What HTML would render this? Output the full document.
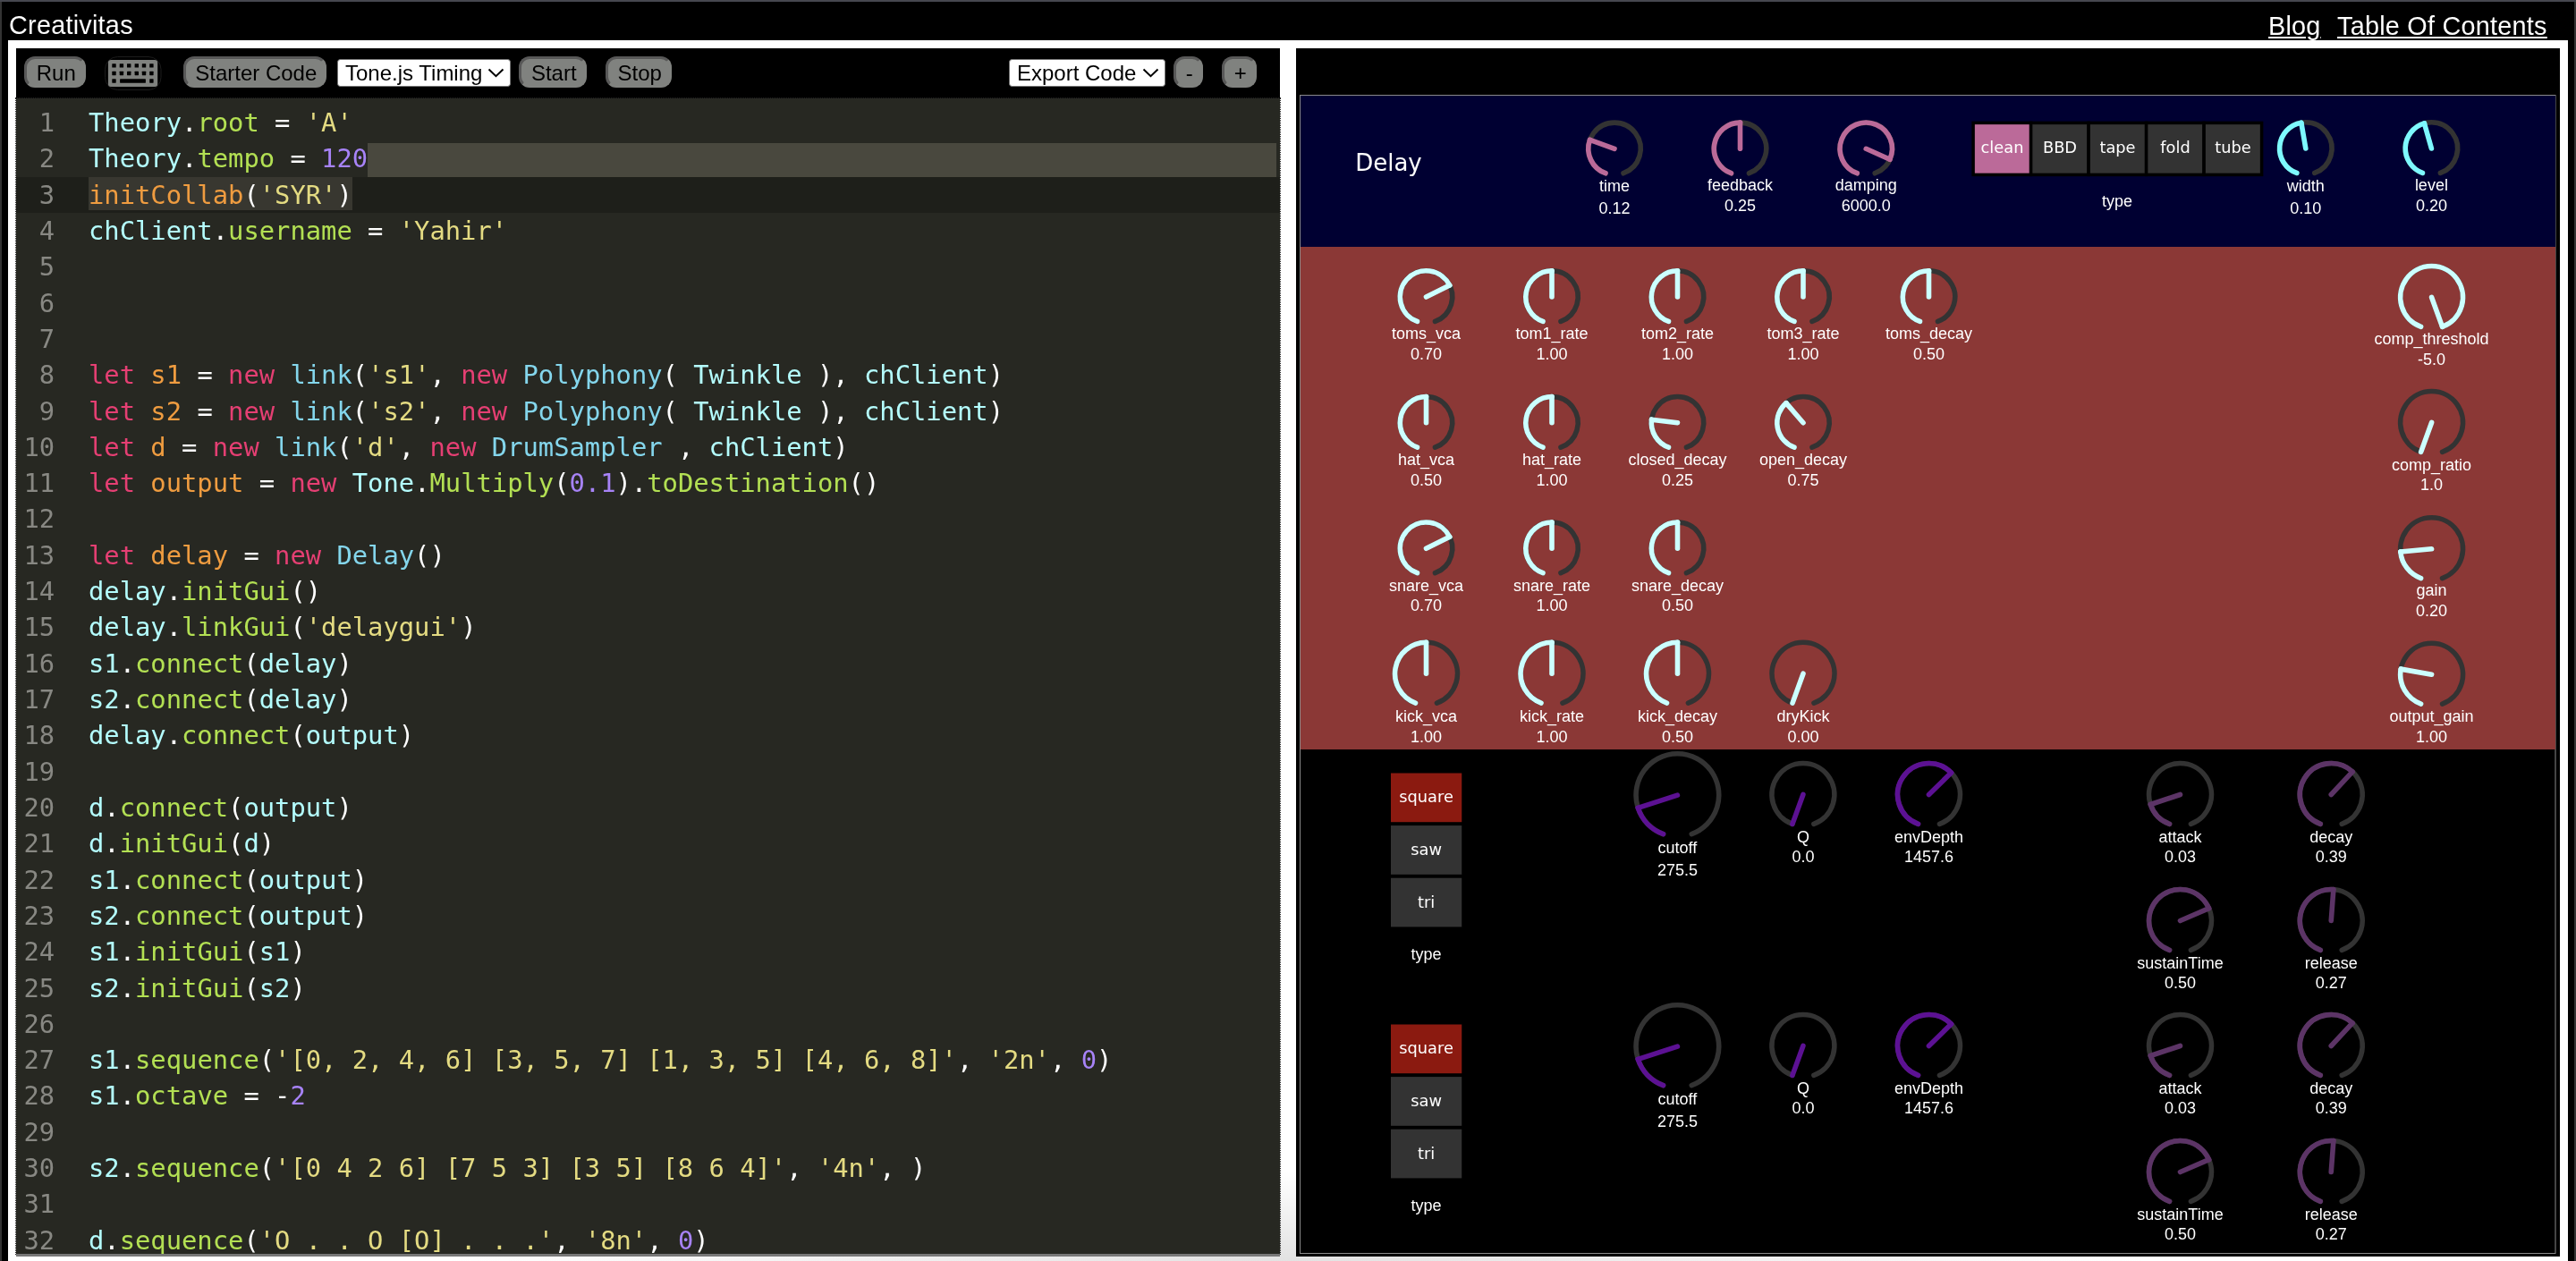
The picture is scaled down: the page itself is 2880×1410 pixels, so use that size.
<!DOCTYPE html>
<html lang="en"><head><meta charset="utf-8"><title>Creativitas</title>
<style>
html,body{margin:0;padding:0}
body{width:2880px;height:1410px;overflow:hidden;background:#000;position:relative;font-family:"Liberation Sans",sans-serif}
.abs{position:absolute}
.code,.btn,.sel,.title,.nav,.cv{will-change:transform}
.frame-t{left:0;top:0;width:2880px;height:2px;background:#46474f}
.frame-l{left:0;top:2px;width:2px;height:1408px;background:#343434}
.frame-r{left:2878px;top:2px;width:2px;height:1408px;background:#343434}
.title{left:9.5px;top:11px;font-size:28.8px;line-height:34px;color:#fff;white-space:nowrap;letter-spacing:0.25px}
.nav{top:11.8px;font-size:28.8px;line-height:34px;color:#fff;white-space:nowrap;letter-spacing:0.25px;text-decoration:underline;text-decoration-thickness:2px;text-underline-offset:1.5px}
.white{left:9px;top:45px;width:2862px;height:1365px;background:#fff radial-gradient(ellipse 950px 100px at 1440px 100%,#e2e2e2 0%,#fff 100%)}
.foot{left:9px;top:1405px;width:2862px;height:5px;background:#e9e9e9}
.lp{left:18px;top:54px;width:1413px;height:1351px;background:#000}
.rp{left:1449px;top:54px;width:1413px;height:1351px;background:#000}
.btn{position:absolute;box-sizing:border-box;top:63px;height:35px;background:#80827f;border:3px solid;border-color:#585858 #80827f #80827f #585858;border-radius:12px;font-size:24px;line-height:27px;color:#000;text-align:center;white-space:nowrap;padding:1.8px 0 0 2.5px;margin:0;font-family:inherit;display:block;-webkit-appearance:none;appearance:none;outline:none;cursor:pointer;letter-spacing:normal;vertical-align:top}
.sel{position:absolute;box-sizing:border-box;top:66px;height:31px;background:#fff;border:1px solid #767676;border-radius:3.5px;font-size:24px;line-height:28px;color:#000;white-space:nowrap;padding:1px 0 0 8px;margin:0;font-family:inherit;-webkit-appearance:none;appearance:none;outline:none;display:block}
.chw{position:absolute;top:66px;height:31px;pointer-events:none}
.chev{position:absolute;right:7px;top:10px}
.kbd{position:absolute;left:117px;top:63px}
.ed{left:18px;top:110px;width:1413px;height:1291.5px;background:#272822;overflow:hidden;outline:1px dotted #212121}
.edbar{left:18px;top:1401.5px;width:1413px;height:3.5px;background:#787878}
.code{position:absolute;left:0;top:7.3px;width:1413px;font-family:"DejaVu Sans Mono","Liberation Mono",monospace;font-size:28.8px;line-height:40.32px;color:#fff}
.ln{position:relative;height:40.32px}
.actbg{left:0;top:87.94px;width:1413px;height:40.32px;background:#1e1f1a}
.no{position:absolute;left:0;width:43.2px;text-align:right;color:#888883}
.tx{position:absolute;left:81px;white-space:pre}
.v{color:#b4fdfe}.c{color:#84d6ec}.p{color:#b3e053}.s{color:#e4db82}.n{color:#a783f7}.k{color:#e53f73}.d{color:#ef9c40}
.sel1{left:392.75px;top:49.7px;width:1016.25px;height:38.3px;background:#49483e}
.sel2{left:81px;top:88px;width:295.25px;height:36.75px;background:#383730}
.cv{position:absolute;left:0;top:0}
.kl text{font-family:"Liberation Sans",sans-serif;font-size:18px}
.dj text{font-family:"DejaVu Sans","Liberation Sans",sans-serif;font-size:17.8px}
.dt{font-family:"DejaVu Sans","Liberation Sans",sans-serif;font-size:26px}
</style></head><body>
<div class="abs title">Creativitas</div>
<a class="abs nav" style="left:2536px">Blog</a>
<a class="abs nav" style="left:2612.6px">Table Of Contents</a>
<div class="abs white"></div>
<div class="abs lp"></div>
<div class="abs rp"></div>
<button type="button" class="btn" style="left:27px;width:69px">Run</button>
<svg class="kbd" width="64" height="38" viewBox="117 63 64 38"><rect x="117.5" y="63.5" width="62.5" height="37" rx="14" fill="none" stroke="#1c1c1c"/><rect x="120.9" y="66.9" width="55.3" height="30.1" rx="3.2" fill="#80827f"/><g fill="#000"><rect x="125.3" y="71.2" width="4.4" height="4.4" rx="0.4"/><rect x="133.7" y="71.2" width="4.4" height="4.4" rx="0.4"/><rect x="142.0" y="71.2" width="4.4" height="4.4" rx="0.4"/><rect x="150.6" y="71.2" width="4.4" height="4.4" rx="0.4"/><rect x="158.8" y="71.2" width="4.4" height="4.4" rx="0.4"/><rect x="167.2" y="71.2" width="4.4" height="4.4" rx="0.4"/><rect x="125.3" y="79.8" width="4.4" height="4.4" rx="0.4"/><rect x="133.7" y="79.8" width="4.4" height="4.4" rx="0.4"/><rect x="142.0" y="79.8" width="4.4" height="4.4" rx="0.4"/><rect x="150.6" y="79.8" width="4.4" height="4.4" rx="0.4"/><rect x="158.8" y="79.8" width="4.4" height="4.4" rx="0.4"/><rect x="167.2" y="79.8" width="4.4" height="4.4" rx="0.4"/><rect x="125.3" y="88.3" width="4.4" height="4.4" rx="0.4"/><rect x="167.2" y="88.3" width="4.4" height="4.4" rx="0.4"/><rect x="134.1" y="88.3" width="28.8" height="4.4" rx="0.4"/></g></svg>
<button type="button" class="btn" style="left:205px;width:160px">Starter Code</button>
<select class="sel" style="left:377px;width:194px"><option selected>Tone.js Timing</option></select><span class="chw" style="left:377px;width:194px"><svg class="chev" width="19" height="11" viewBox="0 0 19 11"><path d="M1.5 1.5L9.5 9.2L17.5 1.5" fill="none" stroke="#000" stroke-width="2"/></svg></span>
<button type="button" class="btn" style="left:580px;width:76px">Start</button>
<button type="button" class="btn" style="left:677px;width:74px">Stop</button>
<select class="sel" style="left:1128px;width:175px"><option selected>Export Code</option></select><span class="chw" style="left:1128px;width:175px"><svg class="chev" width="19" height="11" viewBox="0 0 19 11"><path d="M1.5 1.5L9.5 9.2L17.5 1.5" fill="none" stroke="#000" stroke-width="2"/></svg></span>
<button type="button" class="btn" style="left:1312px;width:33px">-</button>
<button type="button" class="btn" style="left:1366px;width:39px">+</button>
<div class="abs ed">
<div class="abs actbg"></div>
<div class="abs sel1"></div>
<div class="abs sel2"></div>
<div class="code">
<div class="ln"><span class="no">1</span><span class="tx"><span class="v">Theory</span>.<span class="p">root</span> = <span class="s">'A'</span></span></div>
<div class="ln"><span class="no">2</span><span class="tx"><span class="v">Theory</span>.<span class="p">tempo</span> = <span class="n">120</span></span></div>
<div class="ln act"><span class="no">3</span><span class="tx"><span class="d">initCollab</span>(<span class="s">'SYR'</span>)</span></div>
<div class="ln"><span class="no">4</span><span class="tx"><span class="v">chClient</span>.<span class="p">username</span> = <span class="s">'Yahir'</span></span></div>
<div class="ln"><span class="no">5</span><span class="tx"></span></div>
<div class="ln"><span class="no">6</span><span class="tx"></span></div>
<div class="ln"><span class="no">7</span><span class="tx"></span></div>
<div class="ln"><span class="no">8</span><span class="tx"><span class="k">let</span> <span class="d">s1</span> = <span class="k">new</span> <span class="c">link</span>(<span class="s">'s1'</span>, <span class="k">new</span> <span class="c">Polyphony</span>( <span class="v">Twinkle</span> ), <span class="v">chClient</span>)</span></div>
<div class="ln"><span class="no">9</span><span class="tx"><span class="k">let</span> <span class="d">s2</span> = <span class="k">new</span> <span class="c">link</span>(<span class="s">'s2'</span>, <span class="k">new</span> <span class="c">Polyphony</span>( <span class="v">Twinkle</span> ), <span class="v">chClient</span>)</span></div>
<div class="ln"><span class="no">10</span><span class="tx"><span class="k">let</span> <span class="d">d</span> = <span class="k">new</span> <span class="c">link</span>(<span class="s">'d'</span>, <span class="k">new</span> <span class="c">DrumSampler</span> , <span class="v">chClient</span>)</span></div>
<div class="ln"><span class="no">11</span><span class="tx"><span class="k">let</span> <span class="d">output</span> = <span class="k">new</span> <span class="v">Tone</span>.<span class="p">Multiply</span>(<span class="n">0.1</span>).<span class="p">toDestination</span>()</span></div>
<div class="ln"><span class="no">12</span><span class="tx"></span></div>
<div class="ln"><span class="no">13</span><span class="tx"><span class="k">let</span> <span class="d">delay</span> = <span class="k">new</span> <span class="c">Delay</span>()</span></div>
<div class="ln"><span class="no">14</span><span class="tx"><span class="v">delay</span>.<span class="p">initGui</span>()</span></div>
<div class="ln"><span class="no">15</span><span class="tx"><span class="v">delay</span>.<span class="p">linkGui</span>(<span class="s">'delaygui'</span>)</span></div>
<div class="ln"><span class="no">16</span><span class="tx"><span class="v">s1</span>.<span class="p">connect</span>(<span class="v">delay</span>)</span></div>
<div class="ln"><span class="no">17</span><span class="tx"><span class="v">s2</span>.<span class="p">connect</span>(<span class="v">delay</span>)</span></div>
<div class="ln"><span class="no">18</span><span class="tx"><span class="v">delay</span>.<span class="p">connect</span>(<span class="v">output</span>)</span></div>
<div class="ln"><span class="no">19</span><span class="tx"></span></div>
<div class="ln"><span class="no">20</span><span class="tx"><span class="v">d</span>.<span class="p">connect</span>(<span class="v">output</span>)</span></div>
<div class="ln"><span class="no">21</span><span class="tx"><span class="v">d</span>.<span class="p">initGui</span>(<span class="v">d</span>)</span></div>
<div class="ln"><span class="no">22</span><span class="tx"><span class="v">s1</span>.<span class="p">connect</span>(<span class="v">output</span>)</span></div>
<div class="ln"><span class="no">23</span><span class="tx"><span class="v">s2</span>.<span class="p">connect</span>(<span class="v">output</span>)</span></div>
<div class="ln"><span class="no">24</span><span class="tx"><span class="v">s1</span>.<span class="p">initGui</span>(<span class="v">s1</span>)</span></div>
<div class="ln"><span class="no">25</span><span class="tx"><span class="v">s2</span>.<span class="p">initGui</span>(<span class="v">s2</span>)</span></div>
<div class="ln"><span class="no">26</span><span class="tx"></span></div>
<div class="ln"><span class="no">27</span><span class="tx"><span class="v">s1</span>.<span class="p">sequence</span>(<span class="s">'[0, 2, 4, 6] [3, 5, 7] [1, 3, 5] [4, 6, 8]'</span>, <span class="s">'2n'</span>, <span class="n">0</span>)</span></div>
<div class="ln"><span class="no">28</span><span class="tx"><span class="v">s1</span>.<span class="p">octave</span> = -<span class="n">2</span></span></div>
<div class="ln"><span class="no">29</span><span class="tx"></span></div>
<div class="ln"><span class="no">30</span><span class="tx"><span class="v">s2</span>.<span class="p">sequence</span>(<span class="s">'[0 4 2 6] [7 5 3] [3 5] [8 6 4]'</span>, <span class="s">'4n'</span>, )</span></div>
<div class="ln"><span class="no">31</span><span class="tx"></span></div>
<div class="ln"><span class="no">32</span><span class="tx"><span class="v">d</span>.<span class="p">sequence</span>(<span class="s">'O . . O [O] . . .'</span>, <span class="s">'8n'</span>, <span class="n">0</span>)</span></div>
</div>
</div>
<div class="abs edbar"></div>
<svg class="cv" width="2880" height="1410" viewBox="0 0 2880 1410">
<rect x="1453.5" y="106.5" width="1403.5" height="1295" fill="#000" stroke="#8a8a8a" stroke-width="1"/>
<rect x="1454" y="107" width="1403" height="169" fill="#000032"/>
<rect x="1454" y="276" width="1403" height="562" fill="#8b3836"/>
<g stroke="#000" stroke-width="3.5">
<rect x="2206.10" y="137.4" width="64.5" height="58" fill="#bb6a99"/>
<rect x="2270.60" y="137.4" width="64.5" height="58" fill="#333333"/>
<rect x="2335.10" y="137.4" width="64.5" height="58" fill="#333333"/>
<rect x="2399.60" y="137.4" width="64.5" height="58" fill="#333333"/>
<rect x="2464.10" y="137.4" width="64.5" height="58" fill="#333333"/>
</g>
<rect x="1555" y="864.50" width="79.25" height="54.7" fill="#8b1a10"/>
<rect x="1555" y="923.10" width="79.25" height="54.7" fill="#333333"/>
<rect x="1555" y="981.70" width="79.25" height="54.7" fill="#333333"/>
<rect x="1555" y="1145.50" width="79.25" height="54.7" fill="#8b1a10"/>
<rect x="1555" y="1204.10" width="79.25" height="54.7" fill="#333333"/>
<rect x="1555" y="1262.70" width="79.25" height="54.7" fill="#333333"/>
<g fill="none" stroke-width="5.6" stroke-linecap="round">
<path d="M1795.01 193.74A29.20 29.20 0 1 1 1814.99 193.74" stroke="#333333"/><path d="M1795.01 193.74A29.20 29.20 0 0 1 1777.51 156.46" stroke="#bb6a99"/><path d="M1805.00 166.30L1777.51 156.46" stroke="#bb6a99"/>
<path d="M1935.51 193.74A29.20 29.20 0 1 1 1955.49 193.74" stroke="#333333"/><path d="M1935.51 193.74A29.20 29.20 0 0 1 1945.50 137.10" stroke="#bb6a99"/><path d="M1945.50 166.30L1945.50 137.10" stroke="#bb6a99"/>
<path d="M2076.26 193.74A29.20 29.20 0 1 1 2096.24 193.74" stroke="#333333"/><path d="M2076.26 193.74A29.20 29.20 0 1 1 2112.88 178.27" stroke="#bb6a99"/><path d="M2086.25 166.30L2112.88 178.27" stroke="#bb6a99"/>
<path d="M2567.81 193.44A29.20 29.20 0 1 1 2587.79 193.44" stroke="#333333"/><path d="M2567.81 193.44A29.20 29.20 0 0 1 2572.85 137.22" stroke="#7df9ff"/><path d="M2577.80 166.00L2572.85 137.22" stroke="#7df9ff"/>
<path d="M2708.41 193.44A29.20 29.20 0 1 1 2728.39 193.44" stroke="#333333"/><path d="M2708.41 193.44A29.20 29.20 0 0 1 2710.45 137.90" stroke="#7df9ff"/><path d="M2718.40 166.00L2710.45 137.90" stroke="#7df9ff"/>
<path d="M1584.51 359.44A29.20 29.20 0 1 1 1604.49 359.44" stroke="#333333"/><path d="M1584.51 359.44A29.20 29.20 0 1 1 1620.70 319.11" stroke="#ccffff"/><path d="M1594.50 332.00L1620.70 319.11" stroke="#ccffff"/>
<path d="M1725.01 359.44A29.20 29.20 0 1 1 1744.99 359.44" stroke="#333333"/><path d="M1725.01 359.44A29.20 29.20 0 0 1 1735.00 302.80" stroke="#ccffff"/><path d="M1735.00 332.00L1735.00 302.80" stroke="#ccffff"/>
<path d="M1865.51 359.44A29.20 29.20 0 1 1 1885.49 359.44" stroke="#333333"/><path d="M1865.51 359.44A29.20 29.20 0 0 1 1875.50 302.80" stroke="#ccffff"/><path d="M1875.50 332.00L1875.50 302.80" stroke="#ccffff"/>
<path d="M2006.01 359.44A29.20 29.20 0 1 1 2025.99 359.44" stroke="#333333"/><path d="M2006.01 359.44A29.20 29.20 0 0 1 2016.00 302.80" stroke="#ccffff"/><path d="M2016.00 332.00L2016.00 302.80" stroke="#ccffff"/>
<path d="M2146.51 359.44A29.20 29.20 0 1 1 2166.49 359.44" stroke="#333333"/><path d="M2146.51 359.44A29.20 29.20 0 0 1 2156.50 302.80" stroke="#ccffff"/><path d="M2156.50 332.00L2156.50 302.80" stroke="#ccffff"/>
<path d="M1584.51 500.19A29.20 29.20 0 1 1 1604.49 500.19" stroke="#333333"/><path d="M1584.51 500.19A29.20 29.20 0 0 1 1594.50 443.55" stroke="#ccffff"/><path d="M1594.50 472.75L1594.50 443.55" stroke="#ccffff"/>
<path d="M1725.01 500.19A29.20 29.20 0 1 1 1744.99 500.19" stroke="#333333"/><path d="M1725.01 500.19A29.20 29.20 0 0 1 1735.00 443.55" stroke="#ccffff"/><path d="M1735.00 472.75L1735.00 443.55" stroke="#ccffff"/>
<path d="M1865.51 500.19A29.20 29.20 0 1 1 1885.49 500.19" stroke="#333333"/><path d="M1865.51 500.19A29.20 29.20 0 0 1 1846.52 469.19" stroke="#ccffff"/><path d="M1875.50 472.75L1846.52 469.19" stroke="#ccffff"/>
<path d="M2006.01 500.19A29.20 29.20 0 1 1 2025.99 500.19" stroke="#333333"/><path d="M2006.01 500.19A29.20 29.20 0 0 1 1996.92 450.65" stroke="#ccffff"/><path d="M2016.00 472.75L1996.92 450.65" stroke="#ccffff"/>
<path d="M1584.51 640.69A29.20 29.20 0 1 1 1604.49 640.69" stroke="#333333"/><path d="M1584.51 640.69A29.20 29.20 0 1 1 1620.70 600.36" stroke="#ccffff"/><path d="M1594.50 613.25L1620.70 600.36" stroke="#ccffff"/>
<path d="M1725.01 640.69A29.20 29.20 0 1 1 1744.99 640.69" stroke="#333333"/><path d="M1725.01 640.69A29.20 29.20 0 0 1 1735.00 584.05" stroke="#ccffff"/><path d="M1735.00 613.25L1735.00 584.05" stroke="#ccffff"/>
<path d="M1865.51 640.69A29.20 29.20 0 1 1 1885.49 640.69" stroke="#333333"/><path d="M1865.51 640.69A29.20 29.20 0 0 1 1875.50 584.05" stroke="#ccffff"/><path d="M1875.50 613.25L1875.50 584.05" stroke="#ccffff"/>
<path d="M1582.55 786.09A34.95 34.95 0 1 1 1606.45 786.09" stroke="#333333"/><path d="M1582.55 786.09A34.95 34.95 0 0 1 1594.50 718.30" stroke="#ccffff"/><path d="M1594.50 753.25L1594.50 718.30" stroke="#ccffff"/>
<path d="M1723.05 786.09A34.95 34.95 0 1 1 1746.95 786.09" stroke="#333333"/><path d="M1723.05 786.09A34.95 34.95 0 0 1 1735.00 718.30" stroke="#ccffff"/><path d="M1735.00 753.25L1735.00 718.30" stroke="#ccffff"/>
<path d="M1863.55 786.09A34.95 34.95 0 1 1 1887.45 786.09" stroke="#333333"/><path d="M1863.55 786.09A34.95 34.95 0 0 1 1875.50 718.30" stroke="#ccffff"/><path d="M1875.50 753.25L1875.50 718.30" stroke="#ccffff"/>
<path d="M2004.05 786.09A34.95 34.95 0 1 1 2027.95 786.09" stroke="#333333"/><path d="M2016.00 753.25L2004.05 786.09" stroke="#ccffff"/>
<path d="M2706.65 365.34A34.95 34.95 0 1 1 2730.55 365.34" stroke="#333333"/><path d="M2706.65 365.34A34.95 34.95 0 1 1 2730.55 365.34" stroke="#ccffff"/><path d="M2718.60 332.50L2730.55 365.34" stroke="#ccffff"/>
<path d="M2706.65 505.34A34.95 34.95 0 1 1 2730.55 505.34" stroke="#333333"/><path d="M2718.60 472.50L2706.65 505.34" stroke="#ccffff"/>
<path d="M2706.65 646.54A34.95 34.95 0 1 1 2730.55 646.54" stroke="#333333"/><path d="M2706.65 646.54A34.95 34.95 0 0 1 2683.80 616.93" stroke="#ccffff"/><path d="M2718.60 613.70L2683.80 616.93" stroke="#ccffff"/>
<path d="M2706.65 787.04A34.95 34.95 0 1 1 2730.55 787.04" stroke="#333333"/><path d="M2706.65 787.04A34.95 34.95 0 0 1 2684.18 748.13" stroke="#ccffff"/><path d="M2718.60 754.20L2684.18 748.13" stroke="#ccffff"/>
<path d="M1859.56 932.63A46.33 46.33 0 1 1 1891.24 932.63" stroke="#333333"/><path d="M1859.56 932.63A46.33 46.33 0 0 1 1831.34 903.42" stroke="#5c1193"/><path d="M1875.40 889.10L1831.34 903.42" stroke="#5c1193"/>
<path d="M2003.95 921.34A34.95 34.95 0 1 1 2027.85 921.34" stroke="#333333"/><path d="M2015.90 888.50L2003.95 921.34" stroke="#5c1193"/>
<path d="M2144.55 921.34A34.95 34.95 0 1 1 2168.45 921.34" stroke="#333333"/><path d="M2144.55 921.34A34.95 34.95 0 1 1 2181.47 864.05" stroke="#5c1193"/><path d="M2156.50 888.50L2181.47 864.05" stroke="#5c1193"/>
<path d="M2425.55 921.34A34.95 34.95 0 1 1 2449.45 921.34" stroke="#333333"/><path d="M2425.55 921.34A34.95 34.95 0 0 1 2404.34 899.53" stroke="#5c3466"/><path d="M2437.50 888.50L2404.34 899.53" stroke="#5c3466"/>
<path d="M2594.30 921.34A34.95 34.95 0 1 1 2618.20 921.34" stroke="#333333"/><path d="M2594.30 921.34A34.95 34.95 0 1 1 2630.09 862.94" stroke="#5c3466"/><path d="M2606.25 888.50L2630.09 862.94" stroke="#5c3466"/>
<path d="M2425.55 1062.34A34.95 34.95 0 1 1 2449.45 1062.34" stroke="#333333"/><path d="M2425.55 1062.34A34.95 34.95 0 1 1 2469.60 1015.68" stroke="#5c3466"/><path d="M2437.50 1029.50L2469.60 1015.68" stroke="#5c3466"/>
<path d="M2594.30 1062.34A34.95 34.95 0 1 1 2618.20 1062.34" stroke="#333333"/><path d="M2594.30 1062.34A34.95 34.95 0 0 1 2608.87 994.65" stroke="#5c3466"/><path d="M2606.25 1029.50L2608.87 994.65" stroke="#5c3466"/>
<path d="M1859.56 1213.63A46.33 46.33 0 1 1 1891.24 1213.63" stroke="#333333"/><path d="M1859.56 1213.63A46.33 46.33 0 0 1 1831.34 1184.42" stroke="#5c1193"/><path d="M1875.40 1170.10L1831.34 1184.42" stroke="#5c1193"/>
<path d="M2003.95 1202.34A34.95 34.95 0 1 1 2027.85 1202.34" stroke="#333333"/><path d="M2015.90 1169.50L2003.95 1202.34" stroke="#5c1193"/>
<path d="M2144.55 1202.34A34.95 34.95 0 1 1 2168.45 1202.34" stroke="#333333"/><path d="M2144.55 1202.34A34.95 34.95 0 1 1 2181.47 1145.05" stroke="#5c1193"/><path d="M2156.50 1169.50L2181.47 1145.05" stroke="#5c1193"/>
<path d="M2425.55 1202.34A34.95 34.95 0 1 1 2449.45 1202.34" stroke="#333333"/><path d="M2425.55 1202.34A34.95 34.95 0 0 1 2404.34 1180.53" stroke="#5c3466"/><path d="M2437.50 1169.50L2404.34 1180.53" stroke="#5c3466"/>
<path d="M2594.30 1202.34A34.95 34.95 0 1 1 2618.20 1202.34" stroke="#333333"/><path d="M2594.30 1202.34A34.95 34.95 0 1 1 2630.09 1143.94" stroke="#5c3466"/><path d="M2606.25 1169.50L2630.09 1143.94" stroke="#5c3466"/>
<path d="M2425.55 1343.34A34.95 34.95 0 1 1 2449.45 1343.34" stroke="#333333"/><path d="M2425.55 1343.34A34.95 34.95 0 1 1 2469.60 1296.68" stroke="#5c3466"/><path d="M2437.50 1310.50L2469.60 1296.68" stroke="#5c3466"/>
<path d="M2594.30 1343.34A34.95 34.95 0 1 1 2618.20 1343.34" stroke="#333333"/><path d="M2594.30 1343.34A34.95 34.95 0 0 1 2608.87 1275.65" stroke="#5c3466"/><path d="M2606.25 1310.50L2608.87 1275.65" stroke="#5c3466"/>
</g>
<g class="kl" text-anchor="middle" fill="#fff">
<text x="1805.0" y="213.8">time</text><text x="1805.0" y="238.8">0.12</text>
<text x="1945.5" y="212.5">feedback</text><text x="1945.5" y="236.0">0.25</text>
<text x="2086.2" y="212.6">damping</text><text x="2086.2" y="235.9">6000.0</text>
<text x="2577.8" y="213.6">width</text><text x="2577.8" y="238.6">0.10</text>
<text x="2718.4" y="213.0">level</text><text x="2718.4" y="236.3">0.20</text>
<text x="1594.5" y="378.8">toms_vca</text><text x="1594.5" y="401.8">0.70</text>
<text x="1735.0" y="378.8">tom1_rate</text><text x="1735.0" y="401.8">1.00</text>
<text x="1875.5" y="378.8">tom2_rate</text><text x="1875.5" y="401.8">1.00</text>
<text x="2016.0" y="378.8">tom3_rate</text><text x="2016.0" y="401.8">1.00</text>
<text x="2156.5" y="378.8">toms_decay</text><text x="2156.5" y="401.8">0.50</text>
<text x="1594.5" y="520.0">hat_vca</text><text x="1594.5" y="542.5">0.50</text>
<text x="1735.0" y="520.0">hat_rate</text><text x="1735.0" y="542.5">1.00</text>
<text x="1875.5" y="520.0">closed_decay</text><text x="1875.5" y="542.5">0.25</text>
<text x="2016.0" y="520.0">open_decay</text><text x="2016.0" y="542.5">0.75</text>
<text x="1594.5" y="660.5">snare_vca</text><text x="1594.5" y="682.5">0.70</text>
<text x="1735.0" y="660.5">snare_rate</text><text x="1735.0" y="682.5">1.00</text>
<text x="1875.5" y="660.5">snare_decay</text><text x="1875.5" y="682.5">0.50</text>
<text x="1594.5" y="807.0">kick_vca</text><text x="1594.5" y="829.5">1.00</text>
<text x="1735.0" y="807.0">kick_rate</text><text x="1735.0" y="829.5">1.00</text>
<text x="1875.5" y="807.0">kick_decay</text><text x="1875.5" y="829.5">0.50</text>
<text x="2016.0" y="807.0">dryKick</text><text x="2016.0" y="829.5">0.00</text>
<text x="2718.6" y="385.0">comp_threshold</text><text x="2718.6" y="407.9">-5.0</text>
<text x="2718.6" y="526.2">comp_ratio</text><text x="2718.6" y="547.7">1.0</text>
<text x="2718.6" y="666.0">gain</text><text x="2718.6" y="688.6">0.20</text>
<text x="2718.6" y="806.6">output_gain</text><text x="2718.6" y="829.6">1.00</text>
<text x="1875.4" y="954.1">cutoff</text><text x="1875.4" y="978.8">275.5</text>
<text x="2015.9" y="941.7">Q</text><text x="2015.9" y="963.9">0.0</text>
<text x="2156.5" y="941.7">envDepth</text><text x="2156.5" y="963.9">1457.6</text>
<text x="2437.5" y="941.7">attack</text><text x="2437.5" y="963.9">0.03</text>
<text x="2606.2" y="941.7">decay</text><text x="2606.2" y="963.9">0.39</text>
<text x="2437.5" y="1083.0">sustainTime</text><text x="2437.5" y="1105.2">0.50</text>
<text x="2606.2" y="1083.0">release</text><text x="2606.2" y="1105.2">0.27</text>
<text x="1875.4" y="1235.1">cutoff</text><text x="1875.4" y="1259.8">275.5</text>
<text x="2015.9" y="1222.7">Q</text><text x="2015.9" y="1244.9">0.0</text>
<text x="2156.5" y="1222.7">envDepth</text><text x="2156.5" y="1244.9">1457.6</text>
<text x="2437.5" y="1222.7">attack</text><text x="2437.5" y="1244.9">0.03</text>
<text x="2606.2" y="1222.7">decay</text><text x="2606.2" y="1244.9">0.39</text>
<text x="2437.5" y="1364.0">sustainTime</text><text x="2437.5" y="1386.2">0.50</text>
<text x="2606.2" y="1364.0">release</text><text x="2606.2" y="1386.2">0.27</text>
<text x="2367" y="230.6">type</text>
<text x="1594.5" y="1073.3">type</text><text x="1594.5" y="1354.3">type</text>
</g>
<g class="dj" text-anchor="middle" fill="#fff">
<text x="2238.50" y="170.75">clean</text>
<text x="2303.00" y="170.75">BBD</text>
<text x="2367.50" y="170.75">tape</text>
<text x="2432.00" y="170.75">fold</text>
<text x="2496.50" y="170.75">tube</text>
<text x="1594.6" y="897.00">square</text>
<text x="1594.6" y="955.75">saw</text>
<text x="1594.6" y="1014.50">tri</text>
<text x="1594.6" y="1178.00">square</text>
<text x="1594.6" y="1236.75">saw</text>
<text x="1594.6" y="1295.50">tri</text>
</g>
<text class="dt" x="1515.2" y="190.75" fill="#fff">Delay</text>
</svg>
<div class="abs frame-t"></div><div class="abs frame-l"></div><div class="abs frame-r"></div>
<script>(function(){var w=window.innerWidth;if(w&&Math.abs(w-2880)>2){document.documentElement.style.zoom=w/2880;}})();</script>
</body></html>
